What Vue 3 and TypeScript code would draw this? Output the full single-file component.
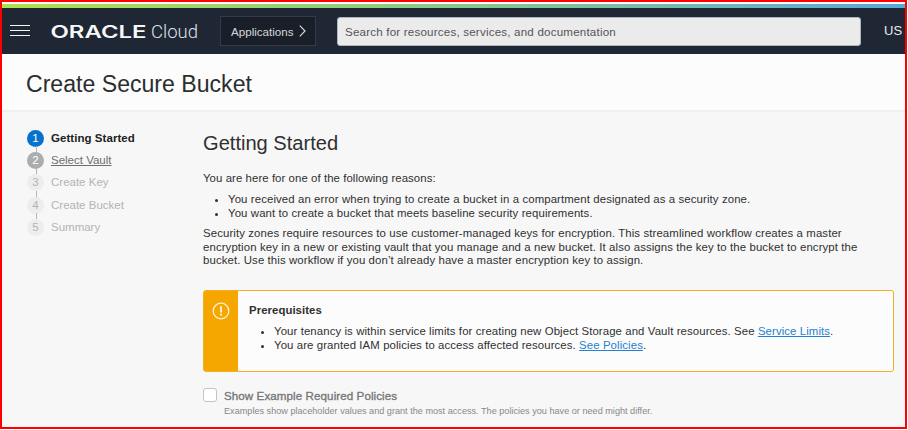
<script setup lang="ts">
interface Step {
  label: string
  state: 'active' | 'next' | 'disabled'
}

const steps: Step[] = [
  { label: 'Getting Started', state: 'active' },
  { label: 'Select Vault', state: 'next' },
  { label: 'Create Key', state: 'disabled' },
  { label: 'Create Bucket', state: 'disabled' },
  { label: 'Summary', state: 'disabled' },
]
</script>

<template>
  <div class="frame">
    <div class="stripe"></div>
    <header class="topbar">
      <svg class="menu" width="20" height="12" viewBox="0 0 20 12">
        <path d="M0 .5h20M0 5.5h20M0 10.5h20" stroke="#f4f5f6" fill="none" />
      </svg>
      <svg class="logo" width="150" height="24" viewBox="0 0 150 24">
        <text class="brand" x="-.5" y="18.5" textLength="96" lengthAdjust="spacingAndGlyphs">ORACLE</text>
        <text class="cloud" x="100" y="18.5" textLength="47" lengthAdjust="spacingAndGlyphs">Cloud</text>
      </svg>
      <button class="apps">
        <span>Applications</span>
        <svg width="7" height="12" viewBox="0 0 7 12">
          <path d="M.8 .7 6 6 .8 11.3" stroke="#d5d7da" stroke-width="1.2" fill="none" />
        </svg>
      </button>
      <div class="search">Search for resources, services, and documentation</div>
      <span class="region">US</span>
    </header>
    <div class="titlebar"><h1>Create Secure Bucket</h1></div>
    <div class="body">
      <ol class="steps">
        <li v-for="(step, i) in steps" :key="step.label" :class="step.state">
          <span class="num">{{ i + 1 }}</span>
          <span class="label">{{ step.label }}</span>
        </li>
      </ol>
      <main>
        <h2>Getting Started</h2>
        <p class="intro">You are here for one of the following reasons:</p>
        <ul class="reasons">
          <li>You received an error when trying to create a bucket in a compartment designated as a security zone.</li>
          <li>You want to create a bucket that meets baseline security requirements.</li>
        </ul>
        <p class="desc">
          Security zones require resources to use customer-managed keys for encryption. This streamlined workflow creates a master<br />
          encryption key in a new or existing vault that you manage and a new bucket. It also assigns the key to the bucket to encrypt the<br />
          bucket. Use this workflow if you don’t already have a master encryption key to assign.
        </p>
        <section class="notice">
          <div class="mark">
            <svg width="18" height="18" viewBox="0 0 18 18">
              <circle cx="9" cy="9" r="7.8" fill="none" stroke="#fff0cf" stroke-width="1.3" />
              <path d="M9 4.2v6.2M9 11.7v1.9" stroke="#fff6e2" stroke-width="1.9" />
            </svg>
          </div>
          <div class="info">
            <h3>Prerequisites</h3>
            <ul>
              <li>Your tenancy is within service limits for creating new Object Storage and Vault resources. See <a>Service Limits</a>.</li>
              <li>You are granted IAM policies to access affected resources. <a>See Policies</a>.</li>
            </ul>
          </div>
        </section>
        <label class="check">
          <span class="box"></span>
          <span>
            <span class="option">Show Example Required Policies</span>
            <small>Examples show placeholder values and grant the most access. The policies you have or need might differ.</small>
          </span>
        </label>
      </main>
    </div>
  </div>
</template>

<style>
body {
  background: #fff;
  overflow: hidden;
}
</style>

<style scoped>
* {
  box-sizing: border-box;
}
.frame {
  width: 907px;
  height: 429px;
  border: 2px solid #f00;
  background: #f7f7f7;
  font-family: "Liberation Sans", Arial, sans-serif;
  font-size: 11.4px;
  line-height: 13.3px;
  color: #303030;
  display: flex;
  flex-direction: column;
  overflow: hidden;
  white-space: nowrap;
}
.stripe {
  height: 6px;
  flex: none;
  border-top: 2px solid #fff;
  background: linear-gradient(90deg, #b2df4c, #8dcb84 45%, #79bba9 70%, #5ba7d8);
}
.topbar {
  height: 46px;
  flex: none;
  background: #1e2733;
  display: flex;
  align-items: center;
  padding-left: 8px;
}
.menu {
  margin-right: 21px;
}
.logo {
  margin-right: 19px;
}
.brand {
  font: 600 17px Inter, sans-serif;
  fill: #f7f7f7;
}
.cloud {
  font: 300 18.5px Roboto, sans-serif;
  fill: #dfe2e5;
}
.apps {
  width: 96px;
  height: 30px;
  padding: 0 0 0 10px;
  border: 1px solid #343b47;
  background: #191f29;
  color: #d5d7da;
  font: 11.6px "Liberation Sans", sans-serif;
  display: flex;
  align-items: center;
  gap: 5px;
}
.search {
  width: 524px;
  height: 29px;
  margin-left: 21px;
  padding-left: 7px;
  border: 1px solid #aeb5bb;
  border-radius: 3px;
  background: #ebebeb;
  color: #555;
  font-size: 11.6px;
  letter-spacing: 0.19px;
  line-height: 28px;
}
.region {
  margin-left: 23px;
  color: #e8e9eb;
  font-size: 13px;
}
.titlebar {
  height: 58px;
  flex: none;
  background: #fcfcfc;
  border-bottom: 2px solid #f0f0f0;
  padding: 16px 0 0 24px;
}
h1 {
  margin: 0;
  font-size: 23.1px;
  font-weight: 400;
  line-height: 28px;
  color: #2b2e2e;
}
.body {
  display: flex;
}
.steps {
  list-style: none;
  margin: 0;
  padding: 18px 0 0 25px;
  width: 201px;
  flex: none;
}
.steps li {
  display: flex;
  align-items: flex-start;
  height: 22.2px;
  color: #b4b4b4;
  gap: 7px;
  font-size: 11.5px;
}
.num {
  position: relative;
  width: 17px;
  height: 17px;
  border-radius: 50%;
  background: #ededed;
  text-align: center;
  line-height: 17px;
}
.steps li + li .num::before {
  content: "";
  position: absolute;
  left: 9px;
  top: -6px;
  width: 1px;
  height: 6px;
  background: #b5b5b5;
}
.label {
  line-height: 17px;
}
.active .num {
  background: #0572ce;
  color: #fff;
}
.active .label {
  font-weight: 700;
  letter-spacing: 0.05px;
  color: #222;
}
.next .num {
  background: #adadad;
  color: #fff;
}
.next .label {
  color: #6e6e6e;
  text-decoration: underline;
}
main {
  width: 691px;
}
h2 {
  margin: 19px 0 0;
  font-size: 20.1px;
  font-weight: 400;
  line-height: 24px;
}
p,
ul {
  margin: 0;
}
.intro {
  margin-top: 17px;
  letter-spacing: 0.07px;
}
ul {
  padding-left: 25px;
}
.reasons {
  margin-top: 8px;
  letter-spacing: 0.105px;
}
.desc {
  margin-top: 7.6px;
  letter-spacing: 0.107px;
}
.notice {
  margin-top: 22.4px;
  height: 82px;
  display: flex;
  border: 1px solid #f3ae28;
  border-radius: 3px;
  background: #fcfcfc;
}
.mark {
  width: 34px;
  flex: none;
  background: #f5a700;
  padding: 11px 0 0 8px;
}
.info {
  padding: 13px 0 0 11px;
  letter-spacing: 0.095px;
}
.info ul {
  line-height: 13.6px;
}
h3 {
  margin: 0 0 8px;
  font-size: 11.4px;
  letter-spacing: 0.05px;
  line-height: 13.3px;
}
a {
  color: #2380d2;
  text-decoration: underline;
}
.check {
  margin-top: 16px;
  display: flex;
  gap: 7px;
  color: #777;
}
.box {
  width: 14px;
  height: 14px;
  border: 1px solid #bfc4ce;
  border-radius: 3px;
  background: #fff;
}
.option {
  display: block;
  font-size: 11.6px;
  letter-spacing: 0.08px;
  -webkit-text-stroke: 0.35px #777;
  line-height: 16px;
}
small {
  display: block;
  font-size: 9.15px;
  line-height: 14px;
  color: #888;
}
</style>
